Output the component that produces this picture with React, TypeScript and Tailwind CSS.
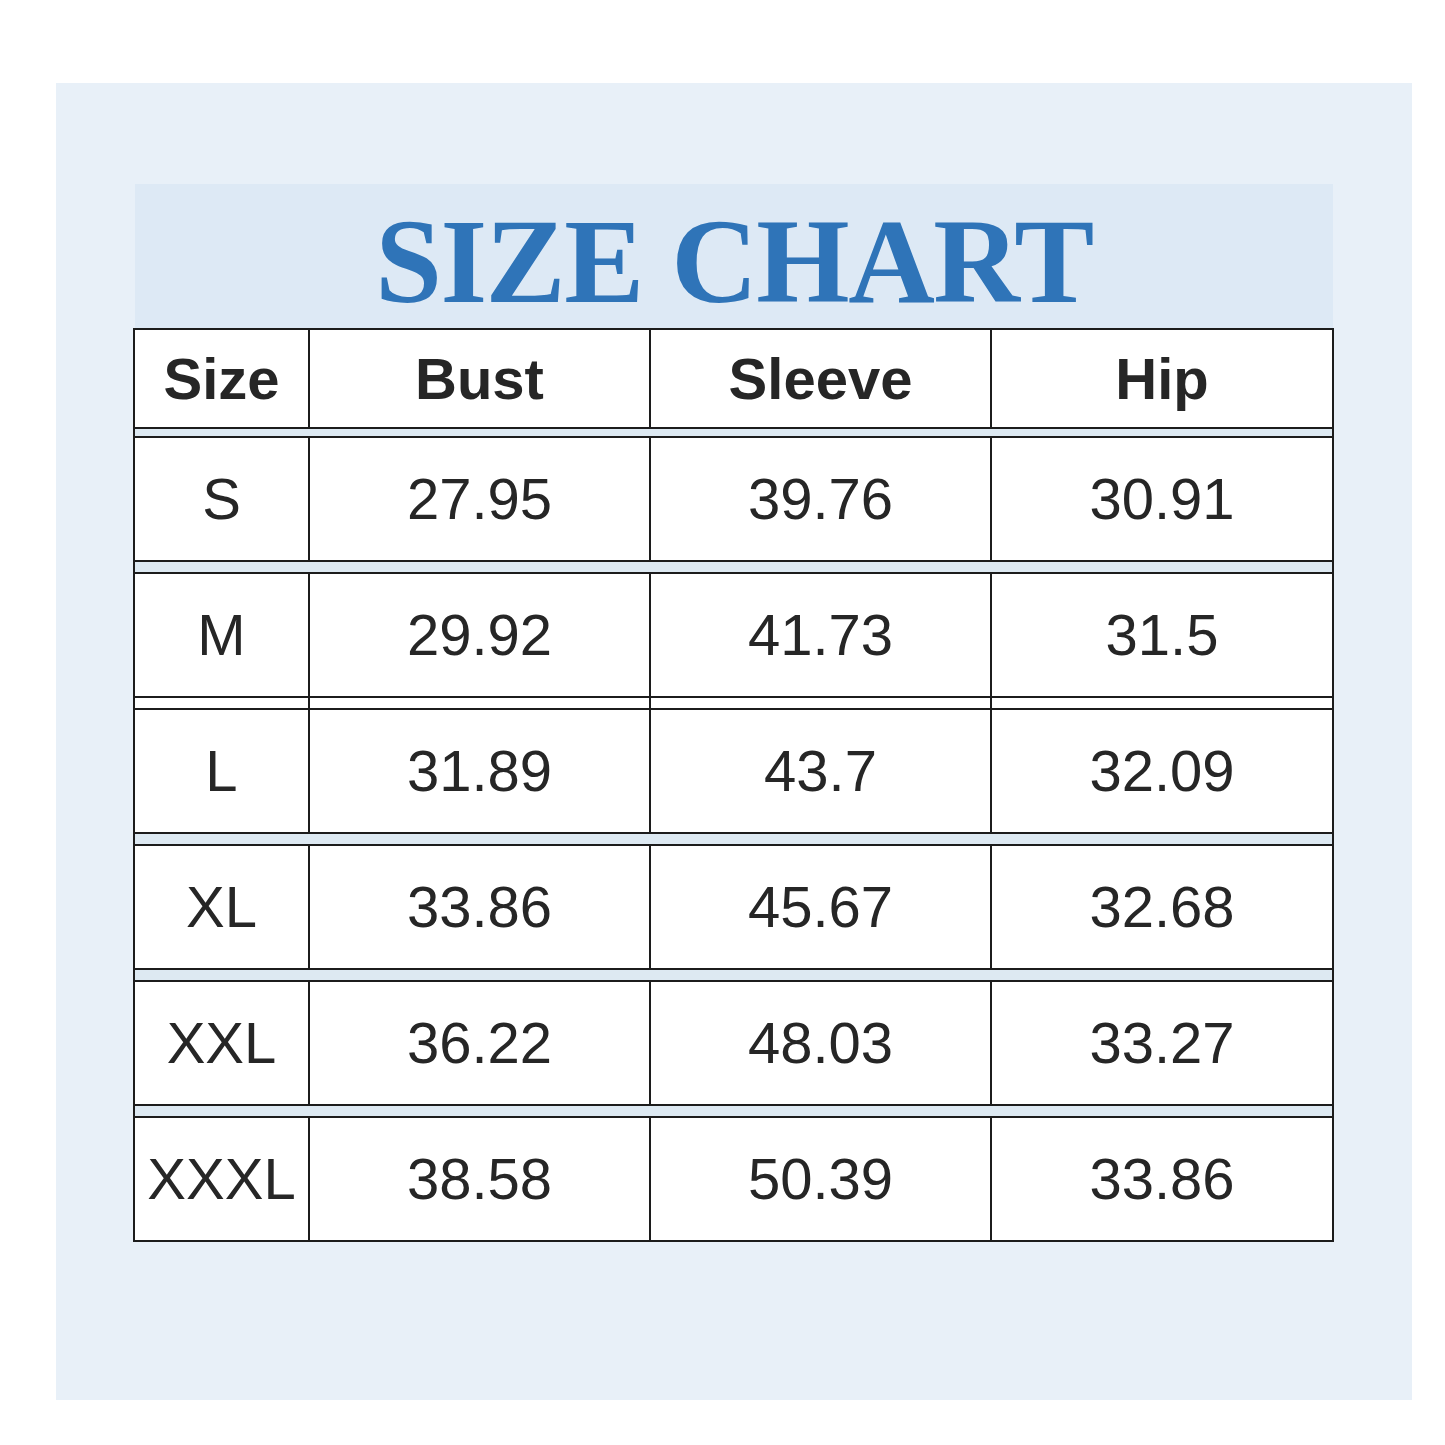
const headers = ['Size', 'Bust', 'Sleeve', 'Hip']

const rows = [
  ['S', '27.95', '39.76', '30.91'],
  ['M', '29.92', '41.73', '31.5'],
  ['L', '31.89', '43.7', '32.09'],
  ['XL', '33.86', '45.67', '32.68'],
  ['XXL', '36.22', '48.03', '33.27'],
  ['XXXL', '38.58', '50.39', '33.86'],
]

const cols = 'grid grid-cols-[175px_341px_341px_1fr]'

function Row({ cells, bold, tall }: { cells: string[]; bold?: boolean; tall?: boolean }) {
  return (
    <div className={`${cols} border-y-2 border-[#1c1c1c] bg-white ${tall ? 'h-[126px]' : 'h-[101px]'}`}>
      {cells.map((c, i) => (
        <div
          key={i}
          className={`flex items-center justify-center text-[58px] leading-none text-[#262626] ${
            bold ? 'font-bold' : ''
          } ${i < cells.length - 1 ? 'border-r-2 border-[#1c1c1c]' : ''}`}
        >
          {c}
        </div>
      ))}
    </div>
  )
}

// gap between rows: mostly light blue, the one after M keeps the column lines
function Gap({ h, plain }: { h: string; plain?: boolean }) {
  if (plain) {
    return (
      <div className={`${cols} ${h} bg-white`}>
        <div className="border-r-2 border-[#1c1c1c]" />
        <div className="border-r-2 border-[#1c1c1c]" />
        <div className="border-r-2 border-[#1c1c1c]" />
        <div />
      </div>
    )
  }
  return <div className={`${h} bg-[#dde9f2]`} />
}

export default function App() {
  return (
    <div className="w-[1445px] h-[1445px] bg-white pt-[83px] pl-[56px]" style={{ fontFamily: '"Liberation Sans", Arial, sans-serif' }}>
      <div className="w-[1356px] h-[1317px] bg-[#e8f0f8] pt-[101px] pl-[77px]">
        <div className="w-[1201px]">
          <div className="ml-[2px] mr-[1px] h-[144px] bg-[#dde9f5] flex justify-center pt-[18px]">
            <h1
              className="text-[120px] leading-none font-bold text-[#2f74b8] tracking-[-1.5px]"
              style={{ fontFamily: '"Liberation Serif", "Times New Roman", serif' }}
            >
              SIZE CHART
            </h1>
          </div>
          <div className="border-x-2 border-[#1c1c1c]">
            <Row cells={headers} bold />
            <Gap h="h-[7px]" />
            {rows.map((r, i) => (
              <div key={r[0]}>
                <Row cells={r} tall />
                {i < rows.length - 1 && <Gap h="h-[10px]" plain={r[0] === 'M'} />}
              </div>
            ))}
          </div>
        </div>
      </div>
    </div>
  )
}
